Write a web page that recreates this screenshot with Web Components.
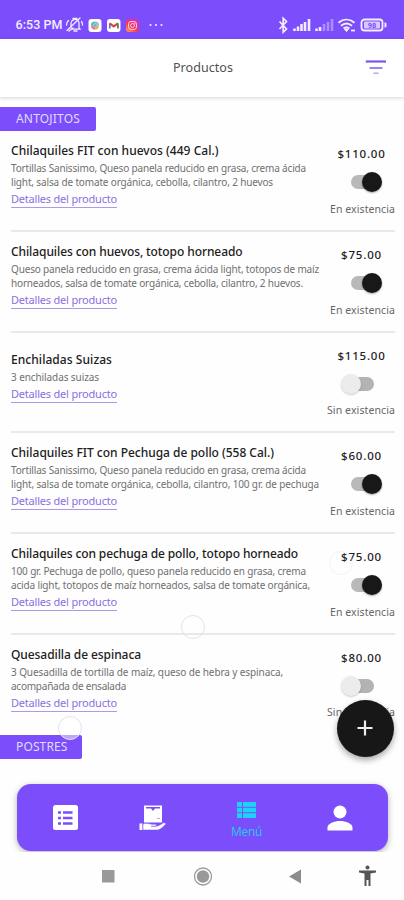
<!DOCTYPE html>
<html lang="es"><head><meta charset="utf-8"><title>Productos</title>
<style>
html,body{margin:0;height:900px;width:404px;overflow:hidden;background:#fefefe}
body{font-family:"Noto Sans","Open Sans",sans-serif}
</style></head><body>
<menu-screen></menu-screen>
<script>
const define=(name,css,html,ready)=>{
  const t=document.createElement('template');
  t.innerHTML='<style>'+css+'</style>'+html;
  customElements.define(name,class extends HTMLElement{
    connectedCallback(){
      if(this.shadowRoot)return;
      this.attachShadow({mode:'open'});
      const c=t.content.cloneNode(true);
      if(ready)ready(this,c);
      this.shadowRoot.appendChild(c);
    }
  });
};

/* One line of text tracked to an exact width. */
customElements.define('fit-text',class extends HTMLElement{
  connectedCallback(){
    if(this.shadowRoot)return;
    this.attachShadow({mode:'open'}).innerHTML='<style>:host{display:block;white-space:nowrap}span{display:inline-block}</style><span></span>';
    const s=this.shadowRoot.querySelector('span');
    const text=this.getAttribute('text');
    s.textContent=text;
    const w=+this.getAttribute('w');
    const sp=(w-s.getBoundingClientRect().width)/text.length;
    s.style.letterSpacing=sp+'px';
  }
});

define('status-bar',`
:host{display:flex;height:39px;box-sizing:border-box;background:#7c4dfb;color:#f3edff;padding:10px 17px 0 15.5px;align-items:center;font:500 12.5px Roboto,sans-serif}
fit-text{width:47px;line-height:16px}
.l,.r{display:flex;align-items:center}.r{margin-left:auto}
svg{display:block;overflow:visible}`,
`<div class="l"><fit-text w="47" text="6:53 PM"></fit-text>
<svg width="100" height="18" viewBox="0 0 100 18" fill="none">
<g stroke="#f3edff" stroke-width="1.3" stroke-linecap="round"><path d="M8 11.800V8a4 4 0 0 1 8-1v5l1 1.200H8.500M11 15h3M4 14.500 17 2M3.500 9c0-2 .8-3.500 2-4.500M18.500 5.500c.8 1 1 2 1 3.500M10 2.500h4M6 15l4-3"/></g>
<rect x="25.500" y="3" width="13" height="13" rx="3" fill="#fff"/><path d="M29 9.500a3 3 0 0 1 3-3" stroke="#57bfa4" stroke-width="2.200"/><path d="M32 6.500a3 3 0 0 1 3 3" stroke="#8dbbe8" stroke-width="2.200"/><path d="M35 9.500a3 3 0 0 1-3 3" stroke="#e4b05a" stroke-width="2.200"/><path d="M32 12.500a3 3 0 0 1-3-3" stroke="#e17595" stroke-width="2.200"/><circle cx="32" cy="9.500" r="1.900" fill="#83b7c5"/>
<rect x="44" y="3" width="13.500" height="13" rx="3" fill="#fff"/><path d="M46.800 12.500v-5" stroke="#4b82d5" stroke-width="1.800"/><path d="m46.600 7.200 4.200 3.200 4.200-3.200" stroke="#d93e35" stroke-width="2"/><path d="M54.900 12.500v-5" stroke="#4b8d51" stroke-width="1.800"/>
<defs><linearGradient id="g" x1="0" y1="1" x2=".8" y2="0"><stop stop-color="#ffb13d"/><stop offset=".45" stop-color="#f4355f"/><stop offset="1" stop-color="#d22bcc"/></linearGradient></defs>
<rect x="63" y="3" width="13" height="13" rx="3" fill="url(#g)"/><rect x="65.600" y="5.600" width="7.800" height="7.800" rx="2.200" stroke="#ffd9e3"/><circle cx="69.500" cy="9.500" r="1.900" stroke="#ffd9e3"/><circle cx="71.800" cy="7.300" r=".6" fill="#ffd9e3"/>
<g fill="#f3edff"><circle cx="87.500" cy="9" r="1.100"/><circle cx="93" cy="9" r="1.100"/><circle cx="98.500" cy="9" r="1.100"/></g>
</svg></div>
<div class="r"><svg width="110" height="18" viewBox="277 0 110 18" fill="none" stroke="#f3edff">
<path d="m279.500 5.500 7 7.500-3.300 3.300V2.200l3.300 3.300-7 7.500" stroke-width="1.700"/>
<g stroke-width="2.600"><path d="M294.500 15v-2.500M298 15v-4.500M301.500 15V8M305 15V6M309 15V3"/><path d="M316.500 15v-2.500M320 15v-4"/><path d="M324 15V8M328 15V6M332 15V3" opacity=".4"/></g>
<path d="M338.500 6.800c5-4.300 11-4.300 16 0M341 9.800c3.500-3 7.500-3 11 0M343.600 12.500c2-1.700 3.900-1.700 5.800 0" stroke-width="1.900"/><path d="m344.500 13 2 2.600 2-2.600z" fill="#f3edff"/><path d="M351 14.500h4" stroke-width="1.800"/>
<rect x="361.500" y="3.500" width="21" height="11" rx="3" stroke-width="1.800"/><rect x="364" y="5.500" width="16" height="7" rx="1" fill="#d8c8ff" stroke="none"/><path d="M384.500 6v6l2-1.500v-3z" fill="#f3edff" stroke="none"/>
<text x="372" y="11.800" text-anchor="middle" font-size="7.500" font-weight="700" fill="#7c4dfb" stroke="none">98</text></svg></div>`);

define('app-header',`
:host{display:grid;grid-template-columns:1fr auto 1fr;align-items:center;height:58px;background:#fff;box-shadow:0 1px 4px rgba(0,0,0,.17);color:#505050;font-size:12.5px;position:relative}
svg{justify-self:end;margin-right:17px}fit-text{width:60px;margin-left:2px;margin-top:-1px}`,
`<i></i><fit-text w="60" text="Productos"></fit-text><svg width="22" height="16" viewBox="0 0 22 16"><path d="M.8 1.500H21" stroke="#7958e8" stroke-width="2.200"/><path d="M4.500 8h13" stroke="#9e86e8" stroke-width="2"/><path d="M8.500 13.300h5" stroke="#b7a8ec" stroke-width="1.600"/></svg>`);

define('section-tag',`
:host{display:block;width:var(--w);height:24px;box-sizing:border-box;padding-left:16px;background:#7c4dfb;color:#e0dcff;font-size:12px;line-height:24px;border-radius:0 2px 2px 0}`,
`<fit-text></fit-text>`,(h,c)=>{const f=c.querySelector('fit-text');f.setAttribute('text',h.getAttribute('label'));f.setAttribute('w',h.getAttribute('tw'));h.style.setProperty('--w',h.getAttribute('w')+'px')});

define('stock-switch',`
:host{display:grid;align-items:center;width:34px;height:22px}
i,b{grid-area:1/1;display:block}
i{width:24px;height:14px;border-radius:7px;background:#b9b9b9;margin-left:2px}
b{width:20px;height:20px;border-radius:50%;background:#181818;box-shadow:0 1px 2px rgba(0,0,0,.35);margin-left:13px}
:host([off]) i{margin-left:9px;background:#b3b3b3}
:host([off]) b{background:#ececec;margin-left:0;box-shadow:0 1px 2px rgba(0,0,0,.2)}`,`<i></i><b></b>`);

define('product-row',`
:host{display:grid;grid-template-columns:1fr 68px;height:100.67px;box-sizing:border-box;margin:0 9px 0 11px;border-bottom:2px solid #e9e9ea}
:host([last]){border-color:transparent}
.info{display:flex;flex-direction:column;align-items:flex-start;justify-content:center;padding-bottom:12px}
.title{font-weight:500;font-size:12px;line-height:20px;color:#202020}
.desc{font-size:10px;line-height:14px;color:#707070}
.desc:nth-last-child(2){margin-bottom:1px}
.link{font-size:11px;line-height:17px;color:#8c70df;border-bottom:1.500px solid #ad98ed;height:17px;width:106px;box-sizing:content-box}
.side{display:grid;grid-template-rows:18px 36px 18px;justify-items:center;align-items:center;padding-top:14px;align-content:start}
.price{font-weight:500;font-size:11.500px;line-height:18px;color:#222;margin-left:1px}
.stock{font-size:10.500px;line-height:18px;color:#666;justify-self:end;padding-top:1px}
stock-switch{justify-self:start;margin-left:22px;margin-top:2px}
:host([off]) stock-switch{margin-left:14px}`,
`<div class="info"></div><div class="side"></div>`,(h,c)=>{
  const add=(p,cls,v)=>{const [t,w]=v.split('|');const f=document.createElement('fit-text');f.className=cls;f.setAttribute('text',t);f.setAttribute('w',w);p.appendChild(f)};
  const info=c.querySelector('.info'),side=c.querySelector('.side');
  add(info,'title',h.getAttribute('name'));
  for(const a of ['d1','d2'])if(h.hasAttribute(a))add(info,'desc',h.getAttribute(a));
  add(info,'link','Detalles del producto|106');
  add(side,'price',h.getAttribute('price'));
  const s=document.createElement('stock-switch');
  const off=h.hasAttribute('off');if(off)s.setAttribute('off','');
  side.appendChild(s);
  add(side,'stock',off?'Sin existencia|68':'En existencia|65');
});

define('add-button',`
:host{display:grid;place-items:center;width:57px;height:57px;border-radius:50%;background:#171717;box-shadow:0 3px 6px rgba(0,0,0,.35)}`,
`<svg width="18" height="18" viewBox="0 0 18 18"><path d="M9 1.500v15M1.500 9h15" stroke="#eee" stroke-width="2.200"/></svg>`);

define('tab-bar',`
:host{display:block;height:75px;overflow:hidden;box-sizing:border-box;padding:7px 16px 0 17px}
nav{display:grid;grid-template-columns:96px 79px 109px 1fr;height:67px;background:#7c4dfb;border-radius:14px;box-shadow:0 2px 6px rgba(0,0,0,.3);align-items:center;justify-items:center}
svg{display:block}.m{display:flex;flex-direction:column;align-items:center;color:#25c6ee;font-size:12px;padding-top:7px}
fit-text{width:31px;line-height:17px;margin-top:5px}`,
`<nav>
<svg width="26" height="26" viewBox="0 0 26 26" style="margin-left:1px"><rect width="25" height="25" rx="2.500" fill="#fff"/><path d="M5 7.500h3M5 13h3M5 18.500h3M10 7.500h9.500M10 13h9.500M10 18.500h9.500" stroke="#7c4dfb" stroke-width="2.300"/></svg>
<svg width="28" height="26" viewBox="0 0 28 26"><path d="M5 .5h18v17H5z" fill="#fff"/><path d="M7 2h14v1.500h-5l-2 2.500-2-2.500H7z" fill="#7c4dfb"/><path d="M18 13.500h3" stroke="#b9a2fb"/><path d="M.5 18.500h3v6.500h-3z" fill="#fff"/><path d="M4 19c4-2 7 .8 12 .3 2 0 2 2 0 2h-4 5c4-.5 6-3.300 8-3.600 2 0 2 1.500 1 2.300-3 2.800-5 5-8 5H4z" fill="#fff" stroke="#7c4dfb" stroke-width=".5"/></svg>
<div class="m"><svg width="19" height="16" viewBox="0 0 19 16"><path fill="#1cd2f6" d="M0 0h5v4.800H0zM6 0h13v4.800H6zM0 5.700h5v4.600H0zM6 5.700h13v4.600H6zM0 11.200h5V16H0zM6 11.200h13V16H6z"/></svg><fit-text w="31" text="Menú"></fit-text></div>
<svg width="26" height="26" viewBox="0 0 26 26" fill="#fff" style="margin-right:9px"><circle cx="13" cy="7" r="6.500"/><path d="M.5 25.500v-3c0-4 7-6.500 12.500-6.500s12.500 2.500 12.500 6.500v3z"/></svg></nav>`);

define('system-nav',`
:host{display:block;height:48px;background:#fefefe}svg{display:block}`,
`<svg width="404" height="48" viewBox="0 0 404 48"><rect x="102" y="18" width="12.500" height="12.500" fill="#999"/><circle cx="203" cy="24.500" r="8.500" fill="none" stroke="#999" stroke-width="1.300"/><circle cx="203" cy="24.500" r="6.200" fill="#999"/><path d="M289 24.500 301 17.500v14z" fill="#8c8c8c"/><g fill="#555"><circle cx="367.500" cy="15.500" r="2"/><path d="M359 18.500h17v2l-5.500 1V34h-2v-6h-2v6h-2V21.500l-5.500-1z"/></g></svg>`);

define('menu-screen',`
:host{display:grid;grid-template-rows:39px 58px 680px 75px 48px;width:404px;height:900px;position:relative;background:#fefefe}
main{padding-top:10.400px;overflow:hidden;height:680px;box-sizing:border-box}
app-header{z-index:1}
add-button{position:absolute;left:336.500px;top:699.500px}
.drop{position:absolute;width:22px;height:22px;border:1.500px solid #e2e2ef;border-radius:50%}`,
`<status-bar></status-bar><app-header></app-header>
<main>
<section-tag label="ANTOJITOS" w="95.500" tw="64"></section-tag>
<product-row name="Chilaquiles FIT con huevos (449 Cal.)|207.500" d1="Tortillas Sanissimo, Queso panela reducido en grasa, crema ácida|295" d2="light, salsa de tomate orgánica, cebolla, cilantro, 2 huevos|262" price="$110.00|48"></product-row>
<product-row name="Chilaquiles con huevos, totopo horneado|231.500" d1="Queso panela reducido en grasa, crema ácida light, totopos de maíz|308" d2="horneados, salsa de tomate orgánica, cebolla, cilantro, 2 huevos.|292" price="$75.00|41"></product-row>
<product-row off name="Enchiladas Suizas|101" d1="3 enchiladas suizas|88" price="$115.00|48"></product-row>
<product-row name="Chilaquiles FIT con Pechuga de pollo (558 Cal.)|263" d1="Tortillas Sanissimo, Queso panela reducido en grasa, crema ácida|295" d2="light, salsa de tomate orgánica, cebolla, cilantro, 100 gr. de pechuga|308" price="$60.00|41"></product-row>
<product-row name="Chilaquiles con pechuga de pollo, totopo horneado|287" d1="100 gr. Pechuga de pollo, queso panela reducido en grasa, crema|295" d2="acida light, totopos de maíz horneados, salsa de tomate orgánica,|299" price="$75.00|41"></product-row>
<product-row off last name="Quesadilla de espinaca|130" d1="3 Quesadilla de tortilla de maíz, queso de hebra y espinaca,|272" d2="acompañada de ensalada|115" price="$80.00|41"></product-row>
<section-tag label="POSTRES" w="82" tw="51.500"></section-tag>
</main>
<tab-bar></tab-bar><system-nav></system-nav>
<div class="drop" style="left:181px;top:614.500px"></div>
<div class="drop" style="left:329px;top:551px;opacity:.45"></div>
<div class="drop" style="left:57.500px;top:716px;background:rgba(255,255,255,.5)"></div>
<add-button></add-button>`);
</script></body></html>
